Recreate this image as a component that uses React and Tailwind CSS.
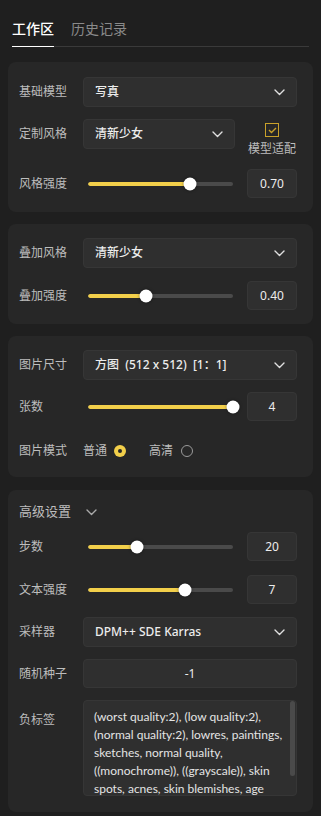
import React from 'react';

const font = { fontFamily: '"Noto Sans", "Noto Sans CJK SC", sans-serif' };

// thin chevron used in the selects
const Chevron = ({ className = 'text-[#e0e0e0]' }) => (
  <svg width="11" height="7" viewBox="0 0 11 7" className={className}>
    <path d="M1 1l4.5 4.5L10 1" fill="none" stroke="currentColor" strokeWidth="1.4" strokeLinecap="round" strokeLinejoin="round" />
  </svg>
);

const Label = ({ children }) => (
  <div className="w-[64px] shrink-0 text-[12px] leading-[16px] text-[#bdbdbd]">{children}</div>
);

const Select = ({ value, className = 'flex-1' }) => (
  <div className={`${className} h-[30px] rounded-[4px] bg-[#2f2f2f] border border-[#363636] flex items-center justify-between pl-[11px] pr-[11px]`}>
    <span className="text-[12px] text-[#ececec] font-medium whitespace-pre">{value}</span>
    <Chevron />
  </div>
);

const NumBox = ({ value }) => (
  <div className="w-[50px] h-[29px] shrink-0 rounded-[4px] bg-[#2f2f2f] border border-[#363636] flex items-center justify-center text-[12px] text-[#ececec]">
    {value}
  </div>
);

const Slider = ({ pct }) => (
  <div className="ml-[5px] w-[146px] relative h-[14px] flex items-center">
    <div className="w-full h-[4px] rounded-full bg-[#4a4a4a] overflow-hidden">
      <div className="h-full bg-[#f2cf4a] rounded-full" style={{ width: `${pct}%` }} />
    </div>
    <div
      className="absolute top-1/2 w-[13px] h-[13px] rounded-full bg-white shadow-[0_0_3px_rgba(0,0,0,0.5)] -translate-x-1/2 -translate-y-1/2"
      style={{ left: `${pct}%` }}
    />
  </div>
);

const SliderRow = ({ label, pct, value, className = '' }) => (
  <div className={`flex items-center ${className}`}>
    <Label>{label}</Label>
    <Slider pct={pct} />
    <div className="ml-[14px]">
      <NumBox value={value} />
    </div>
  </div>
);

const Card = ({ children, className = '' }) => (
  <div className={`mx-2 rounded-[8px] bg-[#272727] pl-[11px] pr-[16px] ${className}`}>{children}</div>
);

const negLines = [
  '(worst quality:2), (low quality:2),',
  '(normal quality:2), lowres, paintings,',
  'sketches, normal quality,',
  '((monochrome)), ((grayscale)), skin',
  'spots, acnes, skin blemishes, age',
];

export default function App() {
  return (
    <div className="w-[321px] min-h-[816px] bg-[#1f1f1f] overflow-hidden" style={font}>
      {/* tabs */}
      <div className="mx-3 pt-[19px] flex gap-[17px] border-b border-[#3a3a3a]">
        <div className="pb-[7px] border-b-[1.5px] border-white -mb-px text-[14px] leading-[20px] text-white font-medium">工作区</div>
        <div className="pb-[7px] text-[14px] leading-[20px] text-[#8a8a8a]">历史记录</div>
      </div>

      <div className="flex flex-col gap-[12px] mt-[15px]">
        {/* model */}
        <Card className="pt-[15px] pb-[14px]">
          <div className="flex items-center">
            <Label>基础模型</Label>
            <Select value="写真" />
          </div>
          <div className="flex items-start mt-[12px]">
            <div className="h-[30px] flex items-center">
              <Label>定制风格</Label>
            </div>
            <Select value="清新少女" className="w-[152px]" />
            <div className="ml-[14px] w-[46px] mt-[4px] flex flex-col items-center">
              <div className="w-[14px] h-[14px] border-[1.5px] border-[#c9a12a] flex items-center justify-center">
                <svg width="9" height="7" viewBox="0 0 9 7">
                  <path d="M1 3l2.5 2.5L8 1" fill="none" stroke="#c9a12a" strokeWidth="1.4" />
                </svg>
              </div>
              <div className="mt-[4px] text-[12px] leading-[16px] text-[#bdbdbd] whitespace-nowrap">模型适配</div>
            </div>
          </div>
          <SliderRow label="风格强度" pct={70} value="0.70" className="mt-[12px]" />
        </Card>

        {/* overlay style */}
        <Card className="pt-[14px] pb-[14px]">
          <div className="flex items-center">
            <Label>叠加风格</Label>
            <Select value="清新少女" />
          </div>
          <SliderRow label="叠加强度" pct={40} value="0.40" className="mt-[13px]" />
        </Card>

        {/* image */}
        <Card className="pt-[14px] pb-[16px]">
          <div className="flex items-center">
            <Label>图片尺寸</Label>
            <Select value={'方图  (512 x 512)  [1：1]'} />
          </div>
          <SliderRow label="张数" pct={100} value="4" className="mt-[12px]" />
          <div className="flex items-center h-[20px] mt-[20px]">
            <Label>图片模式</Label>
            <span className="text-[12px] text-[#bdbdbd]">普通</span>
            <span className="ml-[7px] w-[12px] h-[12px] rounded-full bg-[#f2cf4a] flex items-center justify-center">
              <span className="w-[4px] h-[4px] rounded-full bg-[#272727]" />
            </span>
            <span className="ml-[23px] text-[12px] text-[#bdbdbd]">高清</span>
            <span className="ml-[8px] w-[12px] h-[12px] rounded-full border-[1.5px] border-[#9a9a9a]" />
          </div>
        </Card>

        {/* advanced */}
        <Card className="mt-[1px] pt-[12px] pb-[16px] mb-[4px]">
          <div className="flex items-center h-[20px]">
            <span className="text-[13px] text-[#bdbdbd]">高级设置</span>
            <span className="ml-[15px]">
              <Chevron className="text-[#aaaaaa]" />
            </span>
          </div>
          <SliderRow label="步数" pct={34} value="20" className="mt-[10px]" />
          <SliderRow label="文本强度" pct={67} value="7" className="mt-[14px]" />
          <div className="flex items-center mt-[13px]">
            <Label>采样器</Label>
            <Select value="DPM++ SDE Karras" />
          </div>
          <div className="flex items-center mt-[12px]">
            <Label>随机种子</Label>
            <div className="flex-1 h-[29px] rounded-[4px] bg-[#2f2f2f] border border-[#363636] flex items-center justify-center text-[12px] text-[#ececec]">
              -1
            </div>
          </div>
          <div className="flex items-start mt-[12px]">
            <div className="pt-[12px]">
              <Label>负标签</Label>
            </div>
            <div className="flex-1 relative h-[96px] rounded-[4px] bg-[#2f2f2f] border border-[#363636] overflow-hidden">
              <div className="pl-[10px] pr-[12px] pt-[7px] text-[12px] leading-[18px] text-[#e4e4e4]" style={{ fontFamily: 'Lato, "Noto Sans CJK SC", sans-serif' }}>
                {negLines.map((l) => (
                  <div key={l} className="whitespace-nowrap">{l}</div>
                ))}
              </div>
              <div className="absolute right-[1px] top-0 w-[5px] h-[75px] rounded-full bg-[#4a4a4a]" />
            </div>
          </div>
        </Card>
      </div>
    </div>
  );
}
